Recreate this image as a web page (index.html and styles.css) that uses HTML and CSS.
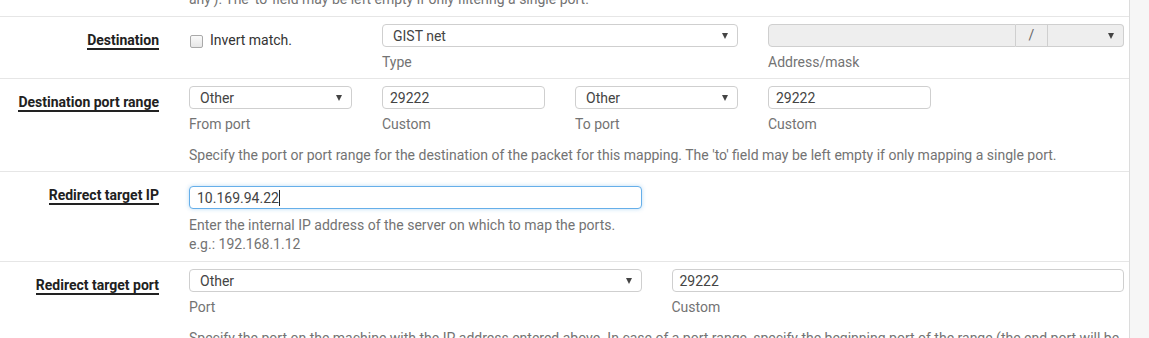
FILE: index.html
```html
<!DOCTYPE html>
<html lang="en">
<head>
    <meta charset="UTF-8">
    <title>Firewall: NAT: Port Forward: Edit</title>
    <link rel="stylesheet" href="styles.css">
</head>
<body>
    <div class="page">
        <div class="panel">
            <!-- tail of the source port row -->
            <div class="form-row row-top">
                <div class="row-label"></div>
                <div class="fields">
                    <p class="help span-10">any'). The 'to' field may be left empty if only filtering a single port.</p>
                </div>
            </div>

            <div class="form-row">
                <div class="row-label"><span class="req">Destination</span></div>
                <div class="fields">
                    <div class="span-2 check-cell">
                        <label class="check"><input type="checkbox"> Invert match.</label>
                    </div>
                    <div class="span-4">
                        <div class="select">GIST net</div>
                        <div class="hint">Type</div>
                    </div>
                    <div class="span-4">
                        <div class="input-group">
                            <div class="control disabled grow"></div>
                            <div class="addon">/</div>
                            <div class="select disabled mask"></div>
                        </div>
                        <div class="hint">Address/mask</div>
                    </div>
                </div>
            </div>

            <div class="form-row">
                <div class="row-label"><span class="req">Destination port range</span></div>
                <div class="fields">
                    <div class="span-2">
                        <div class="select">Other</div>
                        <div class="hint">From port</div>
                    </div>
                    <div class="span-2">
                        <div class="control">29222</div>
                        <div class="hint">Custom</div>
                    </div>
                    <div class="span-2">
                        <div class="select">Other</div>
                        <div class="hint">To port</div>
                    </div>
                    <div class="span-2">
                        <div class="control">29222</div>
                        <div class="hint">Custom</div>
                    </div>
                    <p class="help span-10 help-gap">Specify the port or port range for the destination of the packet for this mapping. The 'to' field may be left empty if only mapping a single port.</p>
                </div>
            </div>

            <div class="form-row row-ip">
                <div class="row-label"><span class="req">Redirect target IP</span></div>
                <div class="fields">
                    <div class="span-5">
                        <div class="control focus">10.169.94.22<span class="caret"></span></div>
                    </div>
                    <p class="help span-10 help-ip">Enter the internal IP address of the server on which to map the ports.<br>e.g.: 192.168.1.12</p>
                </div>
            </div>

            <div class="form-row">
                <div class="row-label"><span class="req">Redirect target port</span></div>
                <div class="fields">
                    <div class="span-5">
                        <div class="select">Other</div>
                        <div class="hint">Port</div>
                    </div>
                    <div class="span-5">
                        <div class="control">29222</div>
                        <div class="hint">Custom</div>
                    </div>
                    <p class="help span-10 help-gap">Specify the port on the machine with the IP address entered above. In case of a port range, specify the beginning port of the range (the end port will be calculated automatically).</p>
                </div>
            </div>
        </div>
        <div class="side"></div>
    </div>
</body>
</html>
```

FILE: styles.css
```css
/* Base */
:root {
    --text-color: #212121;
    --muted-color: #737373;
    --line-color: #e6e6e6;
    --input-border: #cfcfcf;
    --disabled-bg: #eeeeee;
}
body {
    margin: 0;
    font-family: Roboto, "Noto Sans", sans-serif;
    font-size: 14px;
    line-height: 19px;
    color: var(--text-color);
    background: #f6f6f6;
    overflow: hidden;
}
.page {
    display: flex;
    height: 338px;
    overflow: hidden;
}
.panel {
    width: 1129px;
    background: #fff;
    border-right: 1px solid #dcdcdc;
    flex-shrink: 0;
}
.side {
    flex: 1;
    background: #f6f6f6;
}

/* Rows */
.form-row {
    display: flex;
    align-items: flex-start;
    border-top: 1px solid var(--line-color);
    padding: 7px 0 6px;
}
.row-top {
    border-top: none;
    padding: 0 0 7px;
    margin-top: -10px;
}
.row-label {
    width: 159px;
    padding-right: 30px;
    padding-top: 7px;
    text-align: right;
    font-weight: 700;
    flex-shrink: 0;
}
.req {
    border-bottom: 2px solid #222;
}
.fields {
    width: 935px;
    display: grid;
    grid-template-columns: repeat(10, 1fr);
    column-gap: 30px;
}
.span-2 { grid-column: span 2; }
.span-4 { grid-column: span 4; }
.span-5 { grid-column: span 5; }
.span-10 { grid-column: 1 / span 10; }

/* Controls */
.control, .select {
    box-sizing: border-box;
    height: 23px;
    border: 1px solid var(--input-border);
    border-radius: 4px;
    padding: 1px 10px 0;
    line-height: 20px;
    color: #444;
    background: #fff;
    white-space: nowrap;
}
.control { padding-left: 7px; }
.select { position: relative; }
.select::after {
    content: "";
    position: absolute;
    right: 9px;
    top: 8px;
    border-left: 3px solid transparent;
    border-right: 3px solid transparent;
    border-top: 6px solid #444;
}
.disabled { background: var(--disabled-bg); }
.input-group {
    display: flex;
}
.input-group .grow {
    flex: 1;
    border-radius: 4px 0 0 4px;
}
.addon {
    box-sizing: border-box;
    width: 32px;
    height: 23px;
    border: 1px solid var(--input-border);
    border-left: none;
    background: var(--disabled-bg);
    color: #666;
    text-align: center;
    line-height: 21px;
}
.input-group .mask {
    width: 76px;
    border-left: none;
    border-radius: 0 4px 4px 0;
}
.focus {
    border-color: #66afe9;
    box-shadow: 0 0 4px rgba(102, 175, 233, 0.45);
}
.caret {
    display: inline-block;
    width: 1px;
    height: 16px;
    background: #222;
    vertical-align: -3px;
}

/* Checkbox */
.check-cell { padding-top: 7px; }
.check {
    display: flex;
    align-items: center;
    gap: 7px;
    color: #333;
}
.check input {
    appearance: none;
    margin: 2px 0 0 1px;
    width: 13px;
    height: 13px;
    border: 1px solid #a9a9a9;
    border-radius: 2px;
    background: linear-gradient(#fafafa, #e6e6e6);
}

/* Help text */
.hint {
    margin-top: 6px;
    color: var(--muted-color);
}
.help {
    margin: 0;
    color: var(--muted-color);
}
.help-gap { margin-top: 12px; }
.help-ip { margin-top: 7px; }
.row-ip { padding: 14px 0 7px; }
.row-ip .row-label { padding-top: 0; }
```
